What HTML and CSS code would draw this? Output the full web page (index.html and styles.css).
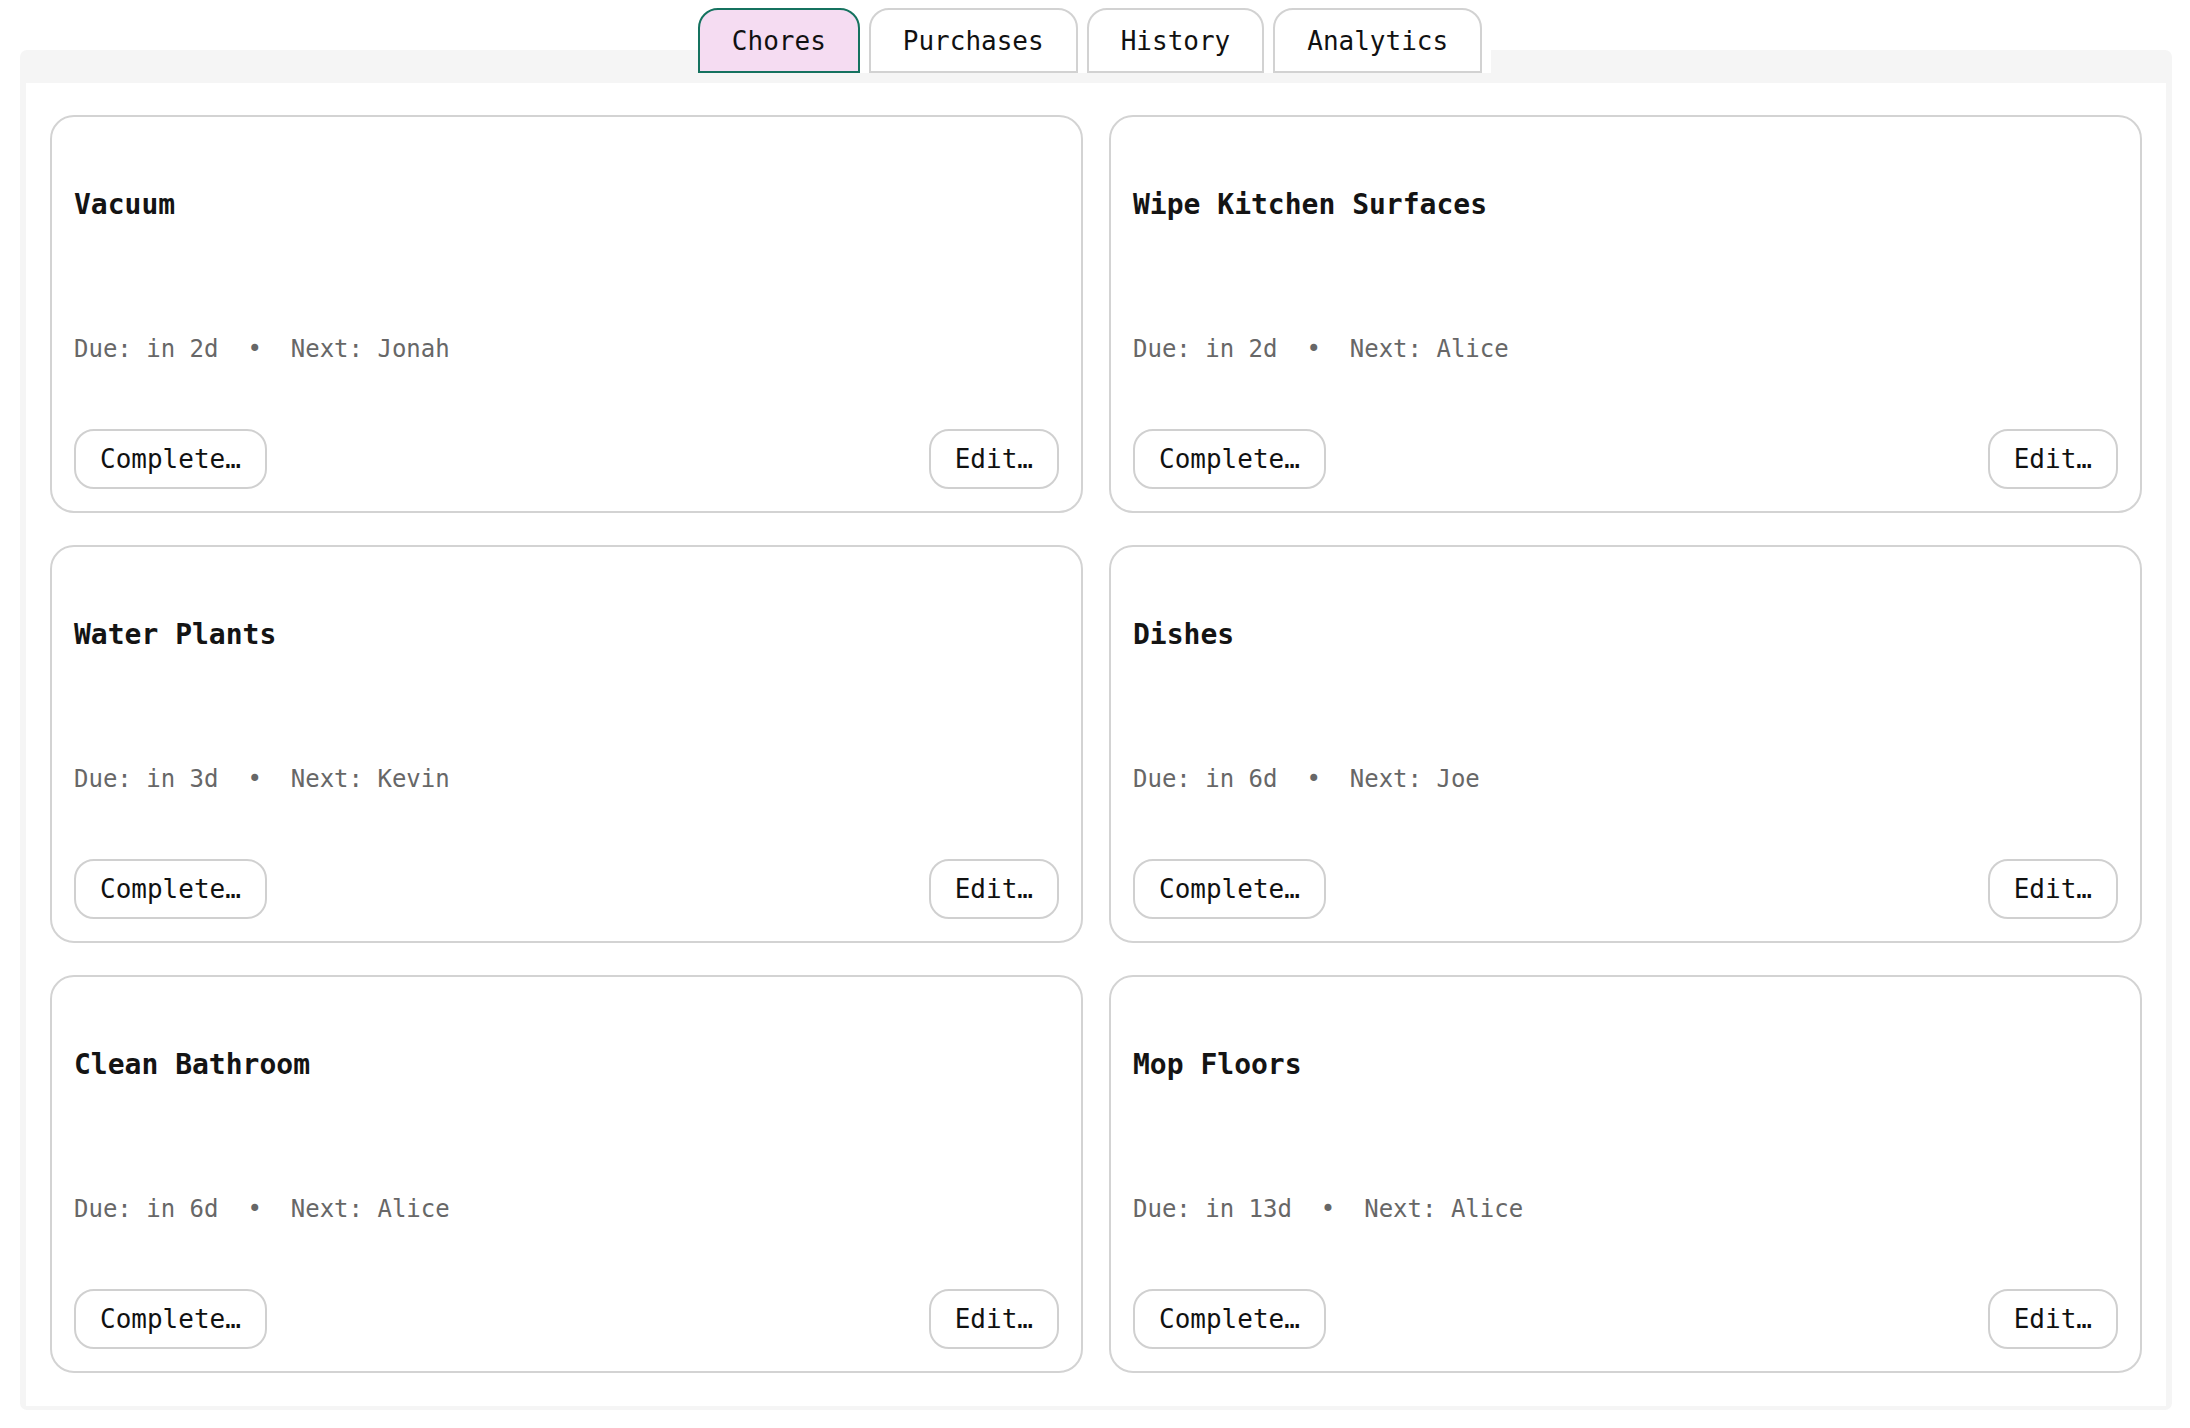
FILE: index.html
```html
<!DOCTYPE html>
<html lang="en">
<head>
<meta charset="utf-8">
<title>Chores</title>
<link rel="stylesheet" href="styles.css">
</head>
<body>
<div class="app">
  <nav class="tabs">
    <div class="tabs-inner">
      <button class="tab active">Chores</button>
      <button class="tab">Purchases</button>
      <button class="tab">History</button>
      <button class="tab">Analytics</button>
    </div>
  </nav>
  <section class="panel">
    <div class="panel-body">
      <div class="card">
        <h3 class="title">Vacuum</h3>
        <p class="meta">Due: in 2d  •  Next: Jonah</p>
        <div class="actions"><button class="btn">Complete…</button><button class="btn">Edit…</button></div>
      </div>
      <div class="card">
        <h3 class="title">Wipe Kitchen Surfaces</h3>
        <p class="meta">Due: in 2d  •  Next: Alice</p>
        <div class="actions"><button class="btn">Complete…</button><button class="btn">Edit…</button></div>
      </div>
      <div class="card">
        <h3 class="title">Water Plants</h3>
        <p class="meta">Due: in 3d  •  Next: Kevin</p>
        <div class="actions"><button class="btn">Complete…</button><button class="btn">Edit…</button></div>
      </div>
      <div class="card">
        <h3 class="title">Dishes</h3>
        <p class="meta">Due: in 6d  •  Next: Joe</p>
        <div class="actions"><button class="btn">Complete…</button><button class="btn">Edit…</button></div>
      </div>
      <div class="card">
        <h3 class="title">Clean Bathroom</h3>
        <p class="meta">Due: in 6d  •  Next: Alice</p>
        <div class="actions"><button class="btn">Complete…</button><button class="btn">Edit…</button></div>
      </div>
      <div class="card">
        <h3 class="title">Mop Floors</h3>
        <p class="meta">Due: in 13d  •  Next: Alice</p>
        <div class="actions"><button class="btn">Complete…</button><button class="btn">Edit…</button></div>
      </div>
    </div>
  </section>
</div>
</body>
</html>
```
FILE: styles.css
```css
* { box-sizing: border-box; }

html, body {
  margin: 0;
  padding: 0;
  background: #ffffff;
  font-family: "DejaVu Sans Mono", "Liberation Mono", monospace;
  color: #111111;
}

.app {
  padding: 8px 18px 0 20px;
}

.tabs {
  position: relative;
  z-index: 1;
  display: flex;
  justify-content: center;
  margin-bottom: -23px;
  padding-right: 3px;
}

.tabs-inner {
  display: flex;
  background: #ffffff;
}

.tab {
  font-family: "DejaVu Sans Mono", "Liberation Mono", monospace;
  font-size: 26px;
  line-height: 30px;
  height: 65px;
  padding: 0 32px;
  margin: 0 9px 0 0;
  background: #ffffff;
  color: #111111;
  border: 2px solid #d2d2d2;
  border-radius: 20px 20px 0 0;
}

.tab.active {
  background: #f5dcf2;
  border-color: #15725f;
}

.panel {
  background: #f5f5f5;
  border-radius: 7px;
  padding: 33px 6px 4px 6px;
}

.panel-body {
  background: #ffffff;
  padding: 32px 24px 33px 24px;
  display: grid;
  grid-template-columns: 1fr 1fr;
  column-gap: 26px;
  row-gap: 32px;
}

.card {
  border: 2px solid #d3d3d3;
  border-radius: 24px;
  padding: 22px;
  display: flex;
  flex-direction: column;
  height: 398px;
}

.title {
  margin: 49px 0 0 0;
  font-size: 28px;
  line-height: 34px;
  font-weight: bold;
  color: #141414;
}

.meta {
  margin: 112px 0 0 0;
  font-size: 24px;
  line-height: 30px;
  color: #676767;
  white-space: pre;
}

.actions {
  margin-top: auto;
  display: flex;
  justify-content: space-between;
  align-items: center;
}

.btn {
  font-family: "DejaVu Sans Mono", "Liberation Mono", monospace;
  font-size: 26px;
  line-height: 30px;
  padding: 13px 24px;
  background: #ffffff;
  color: #111111;
  border: 2px solid #d0d0d0;
  border-radius: 20px;
  margin: 0;
}
```
